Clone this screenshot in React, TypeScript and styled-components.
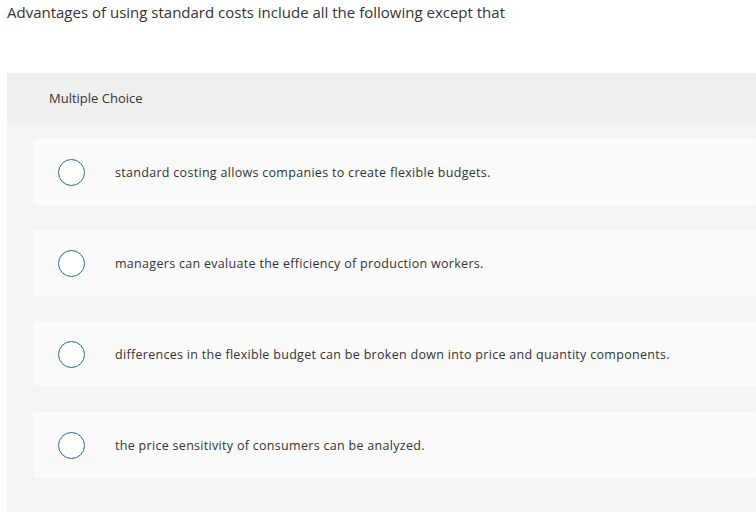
import React from 'react';
import styled, { createGlobalStyle } from 'styled-components';

const GlobalStyle = createGlobalStyle`
    html, body {
        margin: 0;
        padding: 0;
        background: #ffffff;
        overflow: hidden;
    }
    body {
        font-family: "Open Sans", "Liberation Sans", sans-serif;
        color: #333333;
    }
`;

const Page = styled.div`
    width: 756px;
    height: 512px;
    overflow: hidden;
`;

const Question = styled.p`
    margin: 0;
    padding: 2px 0 0 7px;
    font-size: 15px;
    line-height: 20px;
    color: #333333;
`;

const Panel = styled.section`
    margin: 51px 0 0 7px;
    background: #f4f4f4;
    min-height: 440px;
`;

const PanelHeader = styled.div`
    height: 50px;
    display: flex;
    align-items: center;
    padding-left: 42px;
    background: #efefef;
    font-size: 13px;
    color: #333333;
`;

const Options = styled.div`
    display: flex;
    flex-direction: column;
    gap: 25px;
    padding: 16px 0 0 26px;
`;

const OptionCard = styled.label`
    height: 66px;
    display: flex;
    align-items: center;
    background: #fafafa;
    border-radius: 2px;
    padding-left: 25px;
    cursor: pointer;
`;

const Radio = styled.span`
    width: 25px;
    height: 25px;
    border-radius: 50%;
    border: 1.5px solid #2e6499;
    background: #ffffff;
    flex-shrink: 0;
`;

const OptionText = styled.span`
    margin-left: 30px;
    font-size: 12.5px;
    letter-spacing: 0.3px;
    color: #333333;
`;

const choices = [
    'standard costing allows companies to create flexible budgets.',
    'managers can evaluate the efficiency of production workers.',
    'differences in the flexible budget can be broken down into price and quantity components.',
    'the price sensitivity of consumers can be analyzed.',
];

const App: React.FC = () => (
    <Page>
        <GlobalStyle />
        <Question>Advantages of using standard costs include all the following except that</Question>
        <Panel>
            <PanelHeader>Multiple Choice</PanelHeader>
            <Options>
                {choices.map((c) => (
                    <OptionCard key={c}>
                        <Radio />
                        <OptionText>{c}</OptionText>
                    </OptionCard>
                ))}
            </Options>
        </Panel>
    </Page>
);

export default App;
